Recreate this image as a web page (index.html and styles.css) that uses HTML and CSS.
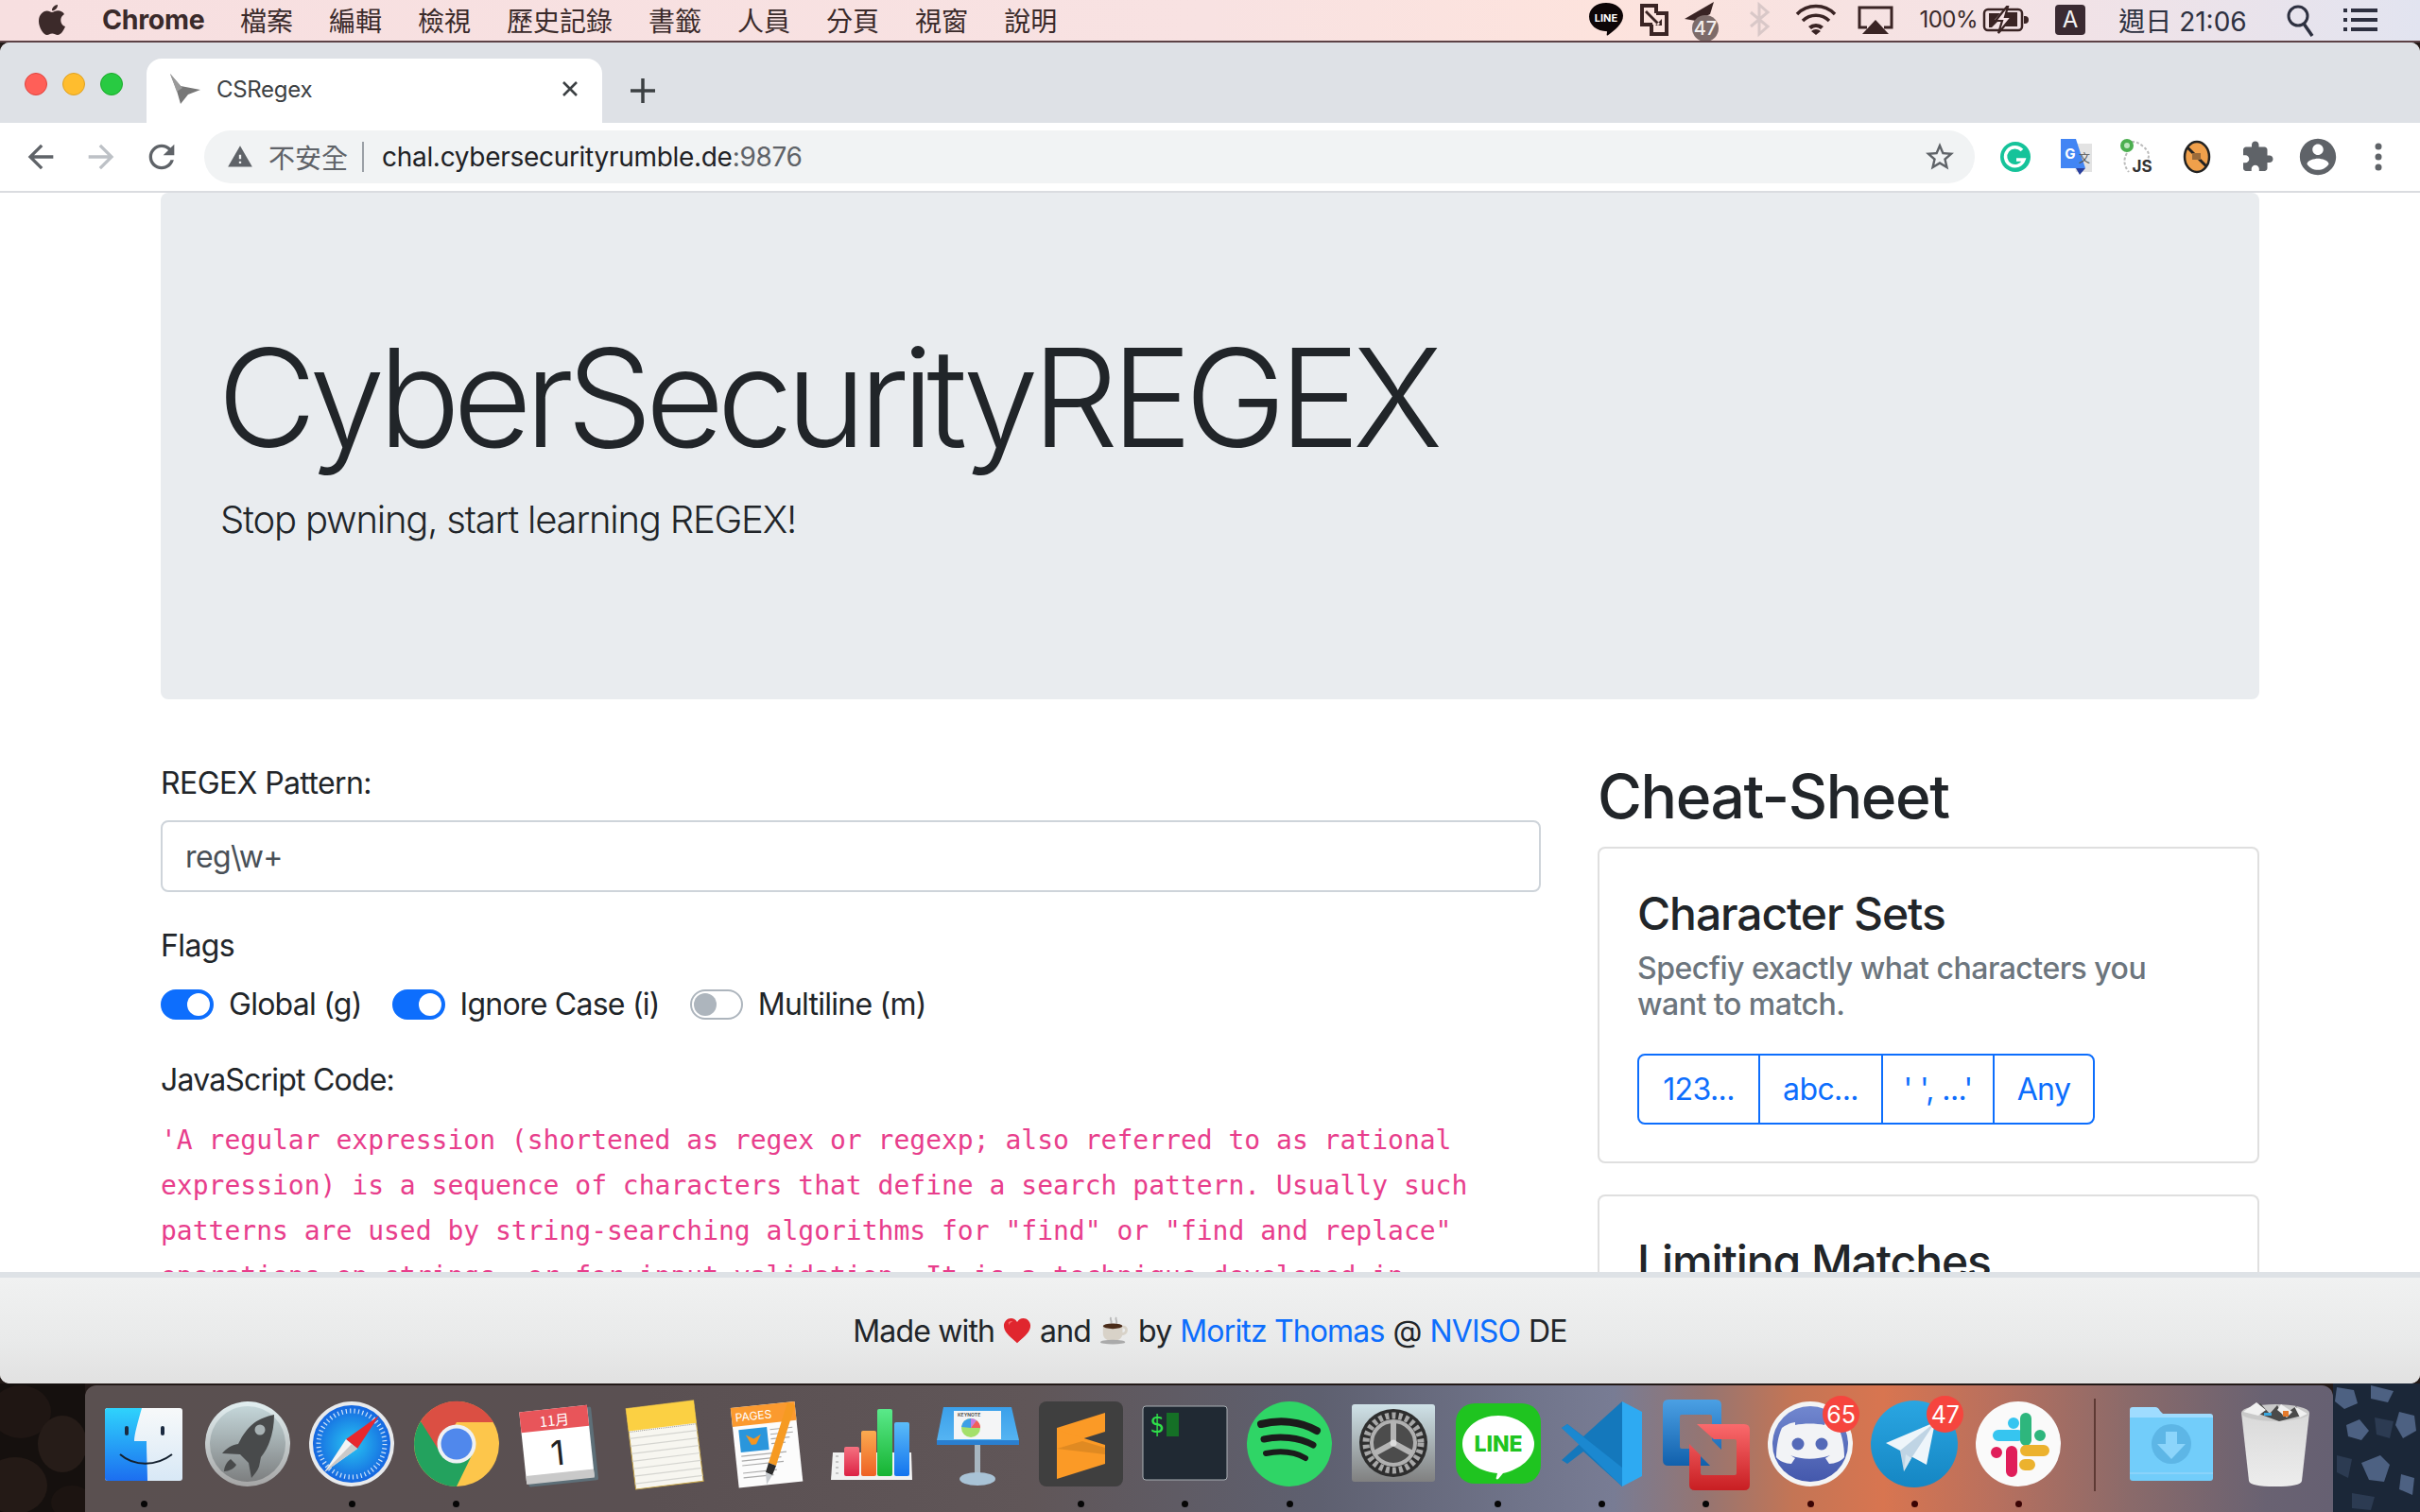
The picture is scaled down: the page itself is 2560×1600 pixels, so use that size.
FILE: index.html
```html
<!DOCTYPE html>
<html lang="zh-Hant">
<head>
<meta charset="utf-8">
<title>CSRegex</title>
<link rel="stylesheet" href="styles.css">
</head>
<body>
<header class="menubar">
  <svg class="apple" width="30" height="36" viewBox="0 0 30 36"><path fill="#3c2a2a" d="M21 2c.3 3-2.500 6.500-6 6.300C14.600 5 18 2.200 21 2zM15 10c1.500 0 3.500-1.700 6.500-1.700 2.500 0 5 1.300 6.500 3.600-5.500 3.200-4.600 11 1 13.200-1.500 3.700-4.500 9-8 9-2.200 0-3.200-1.500-5.800-1.500S12 34 9.800 34C6 34 1 26 1 19.500 1 12.500 5.500 8.500 9.700 8.500c2.300 0 4 1.500 5.300 1.500z"/></svg>
  <strong class="app-name">Chrome</strong>
  <nav class="menus"><span>檔案</span><span>編輯</span><span>檢視</span><span>歷史記錄</span><span>書籤</span><span>人員</span><span>分頁</span><span>視窗</span><span>說明</span></nav>
  <div class="status">
    <svg width="50" height="44" viewBox="0 0 50 44"><path fill="#0d0506" d="M25 5c10 0 18 6 18 14 0 9-9 16-16 21-1 .6-1.500 0-1.300-1l.4-3C15 36 7 29 7 20 7 11 15 5 25 5z" transform="translate(0 -1) scale(1 .98)"/><text class="line-mini" x="25" y="24" text-anchor="middle">LINE</text></svg>
    <svg width="52" height="44" viewBox="0 0 52 44"><g fill="none" stroke="#3a2424" stroke-width="4"><path d="M24 27H13V7h15v8"/><path d="M28 15h11v22H23V27"/></g><path fill="#3a2424" d="M18 12l14 14-2 2-14-14z M27 28h7v-7z"/></svg>
    <svg width="56" height="44" viewBox="0 0 56 44"><path fill="#3a2424" d="M6 21L37 3 33 16 18 23z"/><circle cx="28" cy="31" r="14" fill="#7d6b69"/><text class="menu-badge" x="28" y="38" text-anchor="middle">47</text></svg>
    <svg width="58" height="44" viewBox="0 0 58 44"><path fill="none" stroke="#d9c8c8" stroke-width="3" d="M20 14l18 15-9 8V6l9 8-18 15"/></svg>
    <svg width="62" height="44" viewBox="0 0 62 44"><g fill="none" stroke="#3a2424" stroke-width="3.500"><path d="M11 16a28 28 0 0 1 40 0"/><path d="M17 23a20 20 0 0 1 28 0"/></g><path fill="#3a2424" d="M23 29a12 12 0 0 1 16 0l-3 3a8 8 0 0 0-10 0z M26 34a7 7 0 0 1 10 0l-5 4z"/></svg>
    <svg width="64" height="44" viewBox="0 0 64 44"><path fill="none" stroke="#3a2424" stroke-width="3" d="M23 30h-8V9h34v21h-8"/><path fill="#3a2424" d="M32 22l14 15H18z"/></svg>
    <span class="pct">100%</span>
    <svg width="56" height="44" viewBox="0 0 56 44"><rect x="5" y="11" width="40" height="22" rx="4" fill="none" stroke="#3a2424" stroke-width="2.500"/><path fill="#3a2424" d="M47 18h1a3.500 3.500 0 0 1 0 8h-1z"/><path fill="#3a2424" d="M10 15h12l-6 7h5l-8 8H10z M28 14h12v15H24l7-8h-6z"/><path d="M29 8L17 23h7l-4 13 14-17h-7l3-11z" fill="#f7e3e6" stroke="#3a2424" stroke-width="2.200"/></svg>
    <span class="input-mode"><span class="input-a">A</span></span>
    <span class="clock">週日 21:06</span>
    <svg width="76" height="44" viewBox="0 0 76 44"><circle cx="41" cy="18" r="10" fill="none" stroke="#2d3040" stroke-width="3"/><path stroke="#2d3040" stroke-width="3.500" d="M47 26l9 13"/></svg>
    <svg width="62" height="44" viewBox="0 0 62 44"><g fill="#2d3040"><rect x="13" y="10" width="4" height="4"/><rect x="13" y="20" width="4" height="4"/><rect x="13" y="30" width="4" height="4"/><rect x="21" y="10" width="28" height="4"/><rect x="21" y="20" width="28" height="4"/><rect x="21" y="30" width="28" height="4"/></g></svg>
  </div>
</header>

<section class="window">
  <div class="tabstrip">
    <div class="traffic"><i class="light red"></i><i class="light yellow"></i><i class="light green"></i></div>
    <div class="tab">
      <svg class="favicon" width="34" height="36" viewBox="0 0 34 36"><path fill="#777" d="M1 2l11 13 21 4-13 5-8 10-4-14z"/><path fill="#9a9a9a" d="M1 2l7 19 6-4z"/></svg>
      <span class="tab-title">CSRegex</span>
      <svg class="tab-close" width="20" height="20" viewBox="0 0 20 20"><path stroke="#3c4043" stroke-width="2.600" d="M3 3l14 14M17 3L3 17"/></svg>
    </div>
    <svg class="newtab" width="28" height="28" viewBox="0 0 28 28"><path stroke="#3c4043" stroke-width="3.500" d="M14 1v26M1 14h26"/></svg>
  </div>

  <div class="toolbar">
    <span class="tool"><svg width="40" height="40" viewBox="0 0 24 24"><path fill="#5f6368" d="M20 11H7.830l5.590-5.590L12 4l-8 8 8 8 1.410-1.410L7.830 13H20v-2z"/></svg></span>
    <span class="tool"><svg width="40" height="40" viewBox="0 0 24 24"><path fill="#bdc1c6" d="M12 4l-1.410 1.410L16.170 11H4v2h12.170l-5.580 5.590L12 20l8-8z"/></svg></span>
    <span class="tool"><svg width="40" height="40" viewBox="0 0 24 24"><path fill="#5f6368" d="M17.650 6.350C16.200 4.900 14.210 4 12 4c-4.420 0-7.990 3.580-7.990 8s3.570 8 7.990 8c3.730 0 6.840-2.550 7.730-6h-2.080c-.82 2.330-3.040 4-5.650 4-3.310 0-6-2.690-6-6s2.690-6 6-6c1.660 0 3.140.69 4.220 1.780L13 11h7V4l-2.350 2.350z"/></svg></span>
    <div class="omnibox">
      <svg class="warn" width="28" height="28" viewBox="0 0 24 24"><path fill="#5f6368" d="M1 21h22L12 2 1 21zm12-3h-2v-2h2v2zm0-4h-2v-4h2v4z"/></svg>
      <span class="insecure">不安全</span>
      <i class="omni-div"></i>
      <span class="url">chal.cybersecurityrumble.de<span class="port">:9876</span></span>
      <svg class="star" width="36" height="36" viewBox="0 0 24 24"><path fill="#5f6368" d="M22 9.240l-7.190-.62L12 2 9.190 8.630 2 9.240l5.460 4.730L5.820 21 12 17.270 18.180 21l-1.630-7.030L22 9.240zM12 15.400l-3.760 2.270 1-4.280-3.320-2.880 4.380-.38L12 6.100l1.710 4.040 4.380.38-3.320 2.880 1 4.280L12 15.400z"/></svg>
    </div>
    <div class="extensions">
      <span class="tool"><svg width="36" height="36" viewBox="0 0 36 36"><circle cx="18" cy="18" r="16" fill="#15c39a"/><path fill="none" stroke="#fff" stroke-width="3.500" d="M25 11a10 10 0 1 0 2 10h-8"/></svg></span>
      <span class="tool"><svg width="36" height="40" viewBox="0 0 36 40"><path fill="#e3e3e3" d="M12 6h23v30H18z"/><path fill="#4285f4" d="M2 1h16l10 31H2z"/><path fill="#2a3f9d" d="M18 32h10l-6 7z"/><text class="ext-g" x="12" y="22" text-anchor="middle">G</text><text class="ext-t" x="27" y="26" text-anchor="middle">文</text></svg></span>
      <span class="tool"><svg width="36" height="40" viewBox="0 0 36 40"><g fill="none" stroke="#bbb" stroke-width="2" stroke-dasharray="3 2"><path d="M4 8q10-8 20 0t6 14"/><path d="M8 16q-6 10 2 20"/></g><circle cx="8" cy="8" r="7" fill="#4caf50"/><circle cx="8" cy="8" r="3" fill="#bde5bf"/><text class="ext-js" x="24" y="36" text-anchor="middle">JS</text></svg></span>
      <span class="tool"><svg width="32" height="36" viewBox="0 0 32 36"><ellipse cx="16" cy="18" rx="13" ry="16" fill="#f0a04b" stroke="#222" stroke-width="2.500"/><path d="M6 8l20 20" stroke="#222" stroke-width="3"/><rect x="11" y="14" width="9" height="7" fill="#9a6a3a"/></svg></span>
      <span class="tool"><svg width="36" height="36" viewBox="0 0 24 24"><path fill="#5f6368" d="M20.500 11H19V7c0-1.100-.9-2-2-2h-4V3.500C13 2.120 11.880 1 10.500 1S8 2.120 8 3.500V5H4c-1.100 0-1.990.9-1.990 2v3.800H3.500c1.490 0 2.700 1.210 2.700 2.700s-1.210 2.700-2.700 2.700H2V20c0 1.100.9 2 2 2h3.800v-1.500c0-1.490 1.210-2.700 2.700-2.700 1.490 0 2.700 1.210 2.700 2.700V22H17c1.100 0 2-.9 2-2v-4h1.500c1.380 0 2.500-1.120 2.500-2.500S21.880 11 20.500 11z"/></svg></span>
      <span class="tool"><svg width="46" height="46" viewBox="0 0 24 24"><path fill="#5f6368" d="M12 2C6.480 2 2 6.480 2 12s4.480 10 10 10 10-4.480 10-10S17.520 2 12 2zm0 3c1.660 0 3 1.340 3 3s-1.340 3-3 3-3-1.340-3-3 1.340-3 3-3zm0 14.200c-2.500 0-4.710-1.280-6-3.220.03-1.990 4-3.080 6-3.080 1.990 0 5.970 1.090 6 3.080-1.290 1.940-3.500 3.220-6 3.220z"/></svg></span>
      <span class="tool"><svg width="12" height="32" viewBox="0 0 12 32"><g fill="#5f6368"><circle cx="6" cy="5" r="3.500"/><circle cx="6" cy="16" r="3.500"/><circle cx="6" cy="27" r="3.500"/></g></svg></span>
    </div>
  </div>

  <main class="page">
    <div class="jumbotron">
      <h1 class="display">CyberSecurityREGEX</h1>
      <p class="lead">Stop pwning, start learning REGEX!</p>
    </div>
    <div class="columns">
      <div class="left">
        <label class="field-label">REGEX Pattern:</label>
        <div class="input">reg\w+</div>
        <div class="flags-label">Flags</div>
        <div class="flags">
          <span class="switch on"></span><span class="flag-name">Global (g)</span>
          <span class="switch on"></span><span class="flag-name">Ignore Case (i)</span>
          <span class="switch"></span><span class="flag-name">Multiline (m)</span>
        </div>
        <div class="code-label">JavaScript Code:</div>
        <code class="code">'A regular expression (shortened as regex or regexp; also referred to as rational expression) is a sequence of characters that define a search pattern. Usually such patterns are used by string-searching algorithms for "find" or "find and replace" operations on strings, or for input validation. It is a technique developed in</code>
      </div>
      <aside class="right">
        <h2 class="sheet-title">Cheat-Sheet</h2>
        <div class="card">
          <h4 class="card-title">Character Sets</h4>
          <h6 class="card-sub">Specfiy exactly what characters you want to match.</h6>
          <div class="btn-group"><span class="btn b1">123...</span><span class="btn b2">abc...</span><span class="btn b3">' ', ...'</span><span class="btn b4">Any</span></div>
        </div>
        <div class="card second">
          <h4 class="card-title">Limiting Matches</h4>
        </div>
      </aside>
    </div>
  </main>

  <footer class="footer">
    <span>Made with</span>
    <svg class="emoji" width="30" height="30" viewBox="0 0 32 30"><path fill="#e0262e" d="M16 29C6 21 1 16 1 9.500 1 4.500 5 1 9 1c3 0 5.500 1.500 7 4.500C17.500 2.500 20 1 23 1c4 0 8 3.500 8 8.500C31 16 26 21 16 29z"/><path fill="#f56a6a" d="M6 6c2-2 4-2 5-1-2 0-4 2-4 4z"/></svg>
    <span>and</span>
    <svg class="emoji" width="32" height="30" viewBox="0 0 34 32"><path fill="none" stroke="#b9b9b9" stroke-width="2" d="M13 1c-2 3 2 4 0 7M19 1c-2 3 2 4 0 7"/><path fill="#d8d2c8" d="M4 10h22v9c0 6-5 9-11 9S4 25 4 19z"/><path fill="none" stroke="#d8d2c8" stroke-width="3" d="M26 12c6-1 6 8-1 8"/><ellipse cx="15" cy="11" rx="11" ry="3" fill="#4a2c1a"/><ellipse cx="15" cy="29" rx="14" ry="2.500" fill="#aaa"/></svg>
    <span>by</span>
    <a class="link">Moritz Thomas</a>
    <span>@</span>
    <a class="link">NVISO</a>
    <span>DE</span>
  </footer>
</section>

<div class="desktop">
  <svg class="wall" width="90" height="136" viewBox="0 0 90 136"><rect width="90" height="136" fill="#15100e"/><ellipse cx="22" cy="30" rx="32" ry="28" fill="#1f1613"/><ellipse cx="66" cy="64" rx="26" ry="30" fill="#261c18"/><ellipse cx="16" cy="108" rx="34" ry="30" fill="#241a16"/><ellipse cx="76" cy="126" rx="22" ry="18" fill="#1c1411"/></svg>
  <div class="dock">
    <div class="dock-item">
      <svg width="100" height="100" viewBox="0 0 100 100"><defs><linearGradient id="fb" x1="0" y1="0" x2="0" y2="1"><stop offset="0" stop-color="#2fd3fc"/><stop offset="1" stop-color="#1c6ef0"/></linearGradient><linearGradient id="fw" x1="0" y1="0" x2="0" y2="1"><stop offset="0" stop-color="#f7f9fa"/><stop offset="1" stop-color="#d8e8f6"/></linearGradient></defs><rect x="9" y="12" width="82" height="77" rx="3" fill="url(#fw)"/><path fill="url(#fb)" d="M12 12h36c-4 14-8 28-8 35h13c0 14 1 30 1 42H12a3 3 0 0 1-3-3V15a3 3 0 0 1 3-3z"/><g fill="#1b2a40"><rect x="30" y="31" width="4" height="10" rx="2"/><rect x="68" y="31" width="4" height="10" rx="2"/></g><path fill="none" stroke="#14202e" stroke-width="2" d="M25 61c15 13 38 13 55 0"/></svg>
      <i class="dot"></i>
    </div>
    <div class="dock-item">
      <svg width="100" height="100" viewBox="0 0 100 100"><defs><linearGradient id="rr" x1="0" y1="0" x2="0" y2="1"><stop offset="0" stop-color="#e2eff1"/><stop offset="1" stop-color="#a5a5a5"/></linearGradient><linearGradient id="ri" x1="0" y1="0" x2="0" y2="1"><stop offset="0" stop-color="#c4d6d9"/><stop offset="1" stop-color="#7d7f80"/></linearGradient></defs><circle cx="50" cy="50" r="45" fill="url(#rr)"/><circle cx="50" cy="50" r="40" fill="url(#ri)"/><path fill="#484a4b" d="M78 19c0 18-5 34-14 45l-2 10c-2 5-5 8-8 12l-3-16-9-9-19-1c4-5 10-9 17-10C50 30 60 23 78 19z"/><circle cx="63" cy="35" r="5.500" fill="#a8b2b4"/><path fill="#484a4b" d="M38 72c-2 4-8 7-13 7 0-5 3-10 7-13z"/></svg>
    </div>
    <div class="dock-item">
      <svg width="100" height="100" viewBox="0 0 100 100"><defs><radialGradient id="sb"><stop offset="0" stop-color="#28c5f2"/><stop offset="1" stop-color="#1566e0"/></radialGradient></defs><circle cx="50" cy="50" r="45" fill="#e8eaec"/><circle cx="50" cy="50" r="41" fill="url(#sb)"/><circle cx="50" cy="50" r="35" fill="none" stroke="#fff" stroke-opacity=".8" stroke-width="5" stroke-dasharray="1.200 3.200"/><path fill="#e8282e" d="M79 20L44 45l12 10z"/><path fill="#f4f4f4" d="M21 80l35-25-12-10z"/><path fill="#c9c9c9" d="M21 80l35-25-6-5z"/></svg>
      <i class="dot"></i>
    </div>
    <div class="dock-item">
      <svg width="100" height="100" viewBox="0 0 100 100"><circle cx="50" cy="50" r="45" fill="#fdc64b"/><path fill="#23a25e" d="M12 26A45 45 0 0 0 50 95L68 58 30 50z"/><path fill="#db4f43" d="M12 26A45 45 0 0 1 89 27H50L32 58z"/><circle cx="50" cy="50" r="20.500" fill="#eef1f4"/><circle cx="50" cy="50" r="16.500" fill="#5088ec"/></svg>
      <i class="dot"></i>
    </div>
    <div class="dock-item">
      <svg width="100" height="100" viewBox="0 0 100 100"><g transform="rotate(-6 50 50)"><rect x="12" y="14" width="74" height="78" rx="2" fill="#5d6f78"/><rect x="10" y="12" width="72" height="76" fill="#fff"/><rect x="10" y="12" width="72" height="22" fill="#e8555a"/><rect x="10" y="80" width="72" height="9" fill="#c9c9c9"/><text class="cal-m" x="46" y="30" text-anchor="middle">11月</text><text class="cal-d" x="46" y="72" text-anchor="middle">1</text></g></svg>
    </div>
    <div class="dock-item">
      <svg width="100" height="100" viewBox="0 0 100 100"><g transform="rotate(-7 50 50)"><rect x="14" y="8" width="72" height="86" fill="#f7f6f0" stroke="#c9a84a"/><rect x="14" y="8" width="72" height="24" fill="#fbd043"/><g stroke="#d5d5d0" stroke-width="1.200"><path d="M14 40h72M14 48h72M14 56h72M14 64h72M14 72h72M14 80h72M14 88h72"/></g><path stroke="#999" stroke-dasharray="1 1" d="M14 33h72"/></g></svg>
    </div>
    <div class="dock-item">
      <svg width="100" height="100" viewBox="0 0 100 100"><g transform="rotate(-6 50 50)"><rect x="14" y="8" width="68" height="85" fill="#fcfcfc"/><rect x="14" y="8" width="68" height="20" fill="#fb9a2f"/><text class="pages-t" x="18" y="23">PAGES</text><rect x="20" y="32" width="30" height="24" fill="#2a96dc"/><path fill="#f49521" d="M27 38l8 5 8-4-6 10h-5z"/><g stroke="#aaa" stroke-width="1.200"><path d="M53 35h24M53 40h24M53 45h20M53 50h15M20 60h48M20 65h42M20 70h44M20 78h36M20 83h32"/></g></g><path fill="#f69a22" d="M70 6l8 3-20 64-8-3z"/><path fill="#2c2c2c" d="M50 70l8 3-4 10-7-3z"/><path fill="#c8ccd0" d="M47 80l7 3-6 10z"/></svg>
    </div>
    <div class="dock-item">
      <svg width="100" height="100" viewBox="0 0 100 100"><defs><linearGradient id="n1" x1="0" y1="0" x2="0" y2="1"><stop offset="0" stop-color="#f57180"/><stop offset="1" stop-color="#dc2244"/></linearGradient><linearGradient id="n2" x1="0" y1="0" x2="0" y2="1"><stop offset="0" stop-color="#fbab50"/><stop offset="1" stop-color="#ee6124"/></linearGradient><linearGradient id="n3" x1="0" y1="0" x2="0" y2="1"><stop offset="0" stop-color="#5ae98a"/><stop offset="1" stop-color="#16b332"/></linearGradient><linearGradient id="n4" x1="0" y1="0" x2="0" y2="1"><stop offset="0" stop-color="#5bbcf8"/><stop offset="1" stop-color="#1474ee"/></linearGradient></defs><path fill="#f1f1f1" d="M8 59h83l1 29H6z"/><rect x="20" y="53" width="16" height="31" rx="2" fill="url(#n1)"/><rect x="38" y="36" width="16" height="48" rx="2" fill="url(#n2)"/><rect x="55" y="13" width="16" height="71" rx="2" fill="url(#n3)"/><rect x="73" y="27" width="16" height="57" rx="2" fill="url(#n4)"/><path stroke="#999" d="M11 63h3M11 69h3M11 75h3M11 81h3"/></svg>
    </div>
    <div class="dock-item">
      <svg width="100" height="100" viewBox="0 0 100 100"><defs><linearGradient id="k1" x1="0" y1="0" x2="0" y2="1"><stop offset="0" stop-color="#3ba0ea"/><stop offset="1" stop-color="#55b4f2"/></linearGradient></defs><path fill="url(#k1)" d="M14 11h72l8 35H7z"/><rect x="7" y="46" width="87" height="5" fill="#2a7fd0"/><rect x="25" y="15" width="50" height="30" fill="#f4f5f6"/><text class="key-t" x="29" y="21">KEYNOTE</text><circle cx="43" cy="33" r="10" fill="#a4e06a"/><path fill="#3c9fe6" d="M43 33V23a10 10 0 0 0-10 9z"/><path fill="#f25c5c" d="M43 33h10a10 10 0 0 0-4-8z"/><path fill="#c77ae0" d="M43 33l6-8a10 10 0 0 0-6-2z"/><path fill="#a8b6c0" d="M47 51h6v33h-6z"/><ellipse cx="50" cy="87" rx="19" ry="7" fill="#a9c3d6"/></svg>
    </div>
    <div class="dock-item">
      <svg width="100" height="100" viewBox="0 0 100 100"><rect x="5" y="5" width="89" height="90" rx="8" fill="#3f3f3f"/><path fill="#fb9a26" d="M75 17v20L24 53V33z"/><path fill="#fb9a26" d="M24 46l51 16v20l-51 16V76z" transform="translate(0 -11)"/><path fill="#e08a22" d="M24 55l27-8 24 7v7z"/></svg>
      <i class="dot"></i>
    </div>
    <div class="dock-item">
      <svg width="100" height="100" viewBox="0 0 100 100"><rect x="5" y="10" width="89" height="78" rx="3" fill="#202933" stroke="#aab0b5" stroke-width="1"/><text class="term-t" x="12" y="38">$</text><rect x="30" y="17" width="13" height="25" fill="#157026"/></svg>
      <i class="dot"></i>
    </div>
    <div class="dock-item">
      <svg width="100" height="100" viewBox="0 0 100 100"><circle cx="50" cy="50" r="45" fill="#2fd566"/><g fill="none" stroke="#1b1b1b" stroke-linecap="round"><path stroke-width="8" d="M20 29c20-5 42-3 59 7"/><path stroke-width="7" d="M23 45c17-4 37-2 52 6"/><path stroke-width="6" d="M25 60c15-3 30-2 42 5"/></g></svg>
      <i class="dot"></i>
    </div>
    <div class="dock-item">
      <svg width="100" height="100" viewBox="0 0 100 100"><defs><linearGradient id="pf" x1="0" y1="0" x2="0" y2="1"><stop offset="0" stop-color="#cfe2e8"/><stop offset="1" stop-color="#808080"/></linearGradient></defs><rect x="6" y="8" width="88" height="82" rx="3" fill="url(#pf)"/><circle cx="50" cy="49" r="36" fill="#2e2e2e"/><circle cx="50" cy="49" r="29" fill="none" stroke="#a8a8a8" stroke-width="7" stroke-dasharray="4 3.100"/><circle cx="50" cy="49" r="23" fill="#4c4c4c" stroke="#b0b0b0" stroke-width="4"/><g stroke="#b4b4b4" stroke-width="6"><path d="M50 49V26"/><path d="M50 49l20 11"/><path d="M50 49l-20 11"/></g><circle cx="50" cy="49" r="3.500" fill="#ddd"/></svg>
    </div>
    <div class="dock-item">
      <svg width="100" height="100" viewBox="0 0 100 100"><rect x="5" y="7" width="90" height="85" rx="20" fill="#1fc420"/><path fill="#fff" d="M50 20c22 0 38 14 38 30 0 15-15 27-33 31l-5 6c-2 1-3 0-2-2l1-4C27 79 12 66 12 50c0-16 16-30 38-30z"/><text class="line-big" x="50" y="58" text-anchor="middle">LINE</text></svg>
      <i class="dot"></i>
    </div>
    <div class="dock-item">
      <svg width="100" height="100" viewBox="0 0 100 100"><path fill="#1478bc" d="M71 5L30 42 13 29 7 33l19 17L7 67l6 4 17-13 41 37z"/><path fill="#1b88d0" d="M7 33l6-4 58 46v20z"/><path fill="#2eaaf2" d="M71 5l21 11v68L71 95z"/></svg>
      <i class="dot"></i>
    </div>
    <div class="dock-item">
      <svg width="100" height="100" viewBox="0 0 100 100"><defs><linearGradient id="vb" x1="0" y1="0" x2="0" y2="1"><stop offset="0" stop-color="#4ba0e4"/><stop offset="1" stop-color="#1160ac"/></linearGradient><linearGradient id="vr" x1="0" y1="0" x2="0" y2="1"><stop offset="0" stop-color="#fa6a6c"/><stop offset="1" stop-color="#c81e22"/></linearGradient></defs><path fill="url(#vb)" d="M10 3h50q6 0 6 6v47L56 46V21q0-2-2-2H24q-2 0-2 2v32q0 2 2 2h12l18 18H10q-6 0-6-6V9q0-6 6-6z"/><path fill="url(#vr)" d="M40 29h50q6 0 6 6v58q0 6-6 6H38q-6 0-6-6V50l12 12v19q0 2 2 2h34q2 0 2-2V47q0-2-2-2H58z"/></svg>
      <i class="dot"></i>
    </div>
    <div class="dock-item">
      <svg width="100" height="100" viewBox="0 0 100 100"><defs><linearGradient id="db" x1="0" y1="0" x2="0" y2="1"><stop offset="0" stop-color="#7187cf"/><stop offset="1" stop-color="#4458ac"/></linearGradient></defs><circle cx="50" cy="50" r="45" fill="#f4f4f4"/><circle cx="50" cy="50" r="40" fill="url(#db)"/><path fill="#f2f3f6" d="M34 27c-7 1-11 4-14 6-4 9-6 20-6 31 3 4 10 7 16 7l4-6c-2-1-3-2-5-3 13 5 27 5 42 0l-5 3 4 6c6 0 13-3 16-7 0-11-2-22-6-31-3-2-7-5-14-6l-1 3c-8-2-23-2-31 0z"/><circle cx="37" cy="50" r="6.500" fill="#5469b8"/><circle cx="62" cy="50" r="6.500" fill="#5469b8"/></svg>
      <i class="dot warm"></i>
      <span class="badge">65</span>
    </div>
    <div class="dock-item">
      <svg width="100" height="100" viewBox="0 0 100 100"><defs><linearGradient id="tg" x1="0" y1="0" x2="0" y2="1"><stop offset="0" stop-color="#2aa6e2"/><stop offset="1" stop-color="#1586c3"/></linearGradient></defs><circle cx="50" cy="50" r="46" fill="url(#tg)"/><path fill="#eef5fa" d="M72 27L20 49l15 8 28 15z"/><path fill="#bfd4e4" d="M35 57l4 22 8-14 25-38z"/><path fill="#d6e6f0" d="M39 79l8-14-6-4z"/></svg>
      <i class="dot warm"></i>
      <span class="badge">47</span>
    </div>
    <div class="dock-item">
      <svg width="100" height="100" viewBox="0 0 100 100"><circle cx="50" cy="50" r="45" fill="#fafafa"/><g stroke-linecap="round" fill="none" stroke-width="12"><path stroke="#36c5f0" d="M29 41h21M45 28h0"/><path stroke="#2eb67d" d="M58 23v23M73 41h0"/><path stroke="#e01e5a" d="M27 59h0M43 58v21"/><path stroke="#ecb22e" d="M58 57h19M57 72h5"/></g></svg>
      <i class="dot warm"></i>
    </div>
    <div class="dock-sep"></div>
    <div class="dock-item">
      <svg width="100" height="100" viewBox="0 0 100 100"><path fill="#9fdcff" d="M6 14q0-3 3-3h24q3 0 5 4l3 3h50q3 0 3 3v10H6z"/><path fill="#72cdfa" d="M6 22h88v64q0 3-3 3H9q-3 0-3-3z"/><path fill="#8ad3fa" d="M6 80h88v2H6z"/><circle cx="50" cy="50" r="21" fill="#5db6e6"/><path fill="#8cd5fb" d="M44 37h12v13h9L50 66 35 50h9z"/></svg>
    </div>
    <div class="dock-item">
      <svg width="100" height="100" viewBox="0 0 100 100"><defs><linearGradient id="tr" x1="0" y1="0" x2="0" y2="1"><stop offset="0" stop-color="#d9d9d9"/><stop offset="1" stop-color="#ededed"/></linearGradient></defs><path fill="url(#tr)" d="M14 17h72l-8 72q-1 6-28 6t-28-6z"/><ellipse cx="50" cy="17" rx="36" ry="9" fill="#c9c9c9"/><path fill="#4a4a4a" d="M24 15l10-8 10 11 8-9 6 11 14-10 6 10-24 6z"/><path fill="#f0f0f0" d="M16 16l14-10 10 8-8 6zM56 8l12 8-6 6-10-8zM70 10l14 8-8 4z"/><path fill="#3aa6dd" d="M38 17h8v3h-8z"/><path fill="#e57a2c" d="M58 15h6v6h-6z"/></svg>
    </div>
  </div>
  <svg class="wall" width="92" height="136" viewBox="0 0 92 136"><rect width="92" height="136" fill="#1b2738"/><g fill="#4d6182"><path d="M4 4l18 3 4 14-14 6-10-8z"/><path d="M40 2l24 6-6 12-18-4z"/><path d="M14 44l14-6 10 12-8 10-14-4z"/><path d="M70 30l16 4 2 16-14 8-8-14z"/><path d="M30 84l20-8 10 10-6 18-16-2z"/><path d="M72 96l14 4-2 18-14-6z"/></g><g fill="#2c3b52"><path d="M44 36l20 4-4 18-14-4z"/><path d="M4 76l16 4-4 20-12-6z"/><path d="M20 116l24 4-4 14-20-2z"/></g></svg>
</div>
</body>
</html>
```

FILE: styles.css
```css
* { box-sizing: border-box; }
html, body { margin: 0; padding: 0; }
body {
  width: 2560px; height: 1600px; overflow: hidden;
  display: flex; flex-direction: column;
  font-family: Inter, "Noto Sans CJK TC", sans-serif;
  background: #231a18;
  color: #212529;
}
svg { display: block; flex: none; }

/* macOS menu bar */
.menubar {
  height: 45px; flex: none; display: flex; align-items: center;
  padding-left: 40px; padding-bottom: 2px;
  background: linear-gradient(90deg, #f7dfe0 0%, #f8e2e2 50%, #fde3dd 66%, #f2e2e6 85%, #e2e4f0 100%);
  border-bottom: 2px solid #5c4246;
  color: #3a2a2a; font-size: 28px;
  font-family: Inter, "Noto Sans CJK TC", sans-serif;
}
.apple { margin-right: 38px; }
.app-name { font-weight: 700; font-size: 28.500px; letter-spacing: -0.300px; margin-right: 36px; width: 110px; }
.menus { display: flex; gap: 38px; font-family: "Noto Sans CJK TC", sans-serif; font-size: 28px; }
.status { display: flex; align-items: center; margin-left: auto; padding-right: 32px; }
.pct { width: 76px; margin-right: 2px; text-align: right; font-size: 24px; letter-spacing: -0.500px; color: #3a2a2a; }
.input-mode { width: 80px; display: flex; justify-content: center; }
.input-a {
  width: 32px; height: 32px; border-radius: 4px; background: #3a2a32; color: #f2f2f2;
  font-size: 24px; display: flex; align-items: center; justify-content: center;
}
.clock { width: 158px; margin-right: 2px; text-align: center; font-size: 28px; color: #2d3040; font-family: Inter, "Noto Sans CJK TC", sans-serif; white-space: nowrap; }
.line-mini { font: 700 11px Inter, sans-serif; fill: #fff; }
.menu-badge { font: 500 20px Inter, sans-serif; fill: #f3efee; }

/* browser window */
.window {
  height: 1419px; flex: none; display: flex; flex-direction: column;
  border-radius: 10px; overflow: hidden; background: #fff;
}
.tabstrip {
  height: 85px; flex: none; background: #dee1e6;
  display: flex; align-items: flex-end; position: relative;
}
.traffic { display: flex; gap: 16px; padding: 0 0 29px 26px; width: 155px; }
.light { width: 24px; height: 24px; border-radius: 50%; display: block; }
.red { background: #ff5f58; border: 1px solid #e0443e; }
.yellow { background: #ffbd2e; border: 1px solid #dea123; }
.green { background: #28ca42; border: 1px solid #1aab29; }
.tab {
  width: 482px; height: 68px; background: #fff; border-radius: 16px 16px 0 0;
  display: flex; align-items: center; padding: 0 24px 4px 24px;
}
.favicon { margin-right: 16px; }
.tab-title { flex: 1; font-size: 24px; color: #3c4043; letter-spacing: -0.300px; }
.newtab { margin: 0 0 20px 29px; }

.toolbar {
  height: 74px; flex: none; background: #fff; border-bottom: 2px solid #dadce0;
  display: flex; align-items: center; padding: 0 12px 0 11px;
}
.tool { width: 64px; height: 64px; display: flex; align-items: center; justify-content: center; flex: none; }
.omnibox {
  flex: 1; height: 56px; border-radius: 28px; margin-left: 13px; background: #f1f3f4;
  display: flex; align-items: center; padding: 0 19px 0 24px; font-size: 28px;
}
.warn { margin-right: 16px; }
.insecure { color: #5f6368; font-family: "Noto Sans CJK TC", sans-serif; font-size: 28px; }
.omni-div { width: 2px; height: 32px; background: #9aa0a6; margin: 0 19px 0 15px; }
.url { flex: 1; color: #202124; letter-spacing: -0.300px; }
.port { color: #5f6368; }
.extensions { display: flex; margin-left: 11px; }
.ext-g { font: 700 15px Inter, sans-serif; fill: #fff; }
.ext-t { font: 400 12px "Noto Sans CJK TC", sans-serif; fill: #555; }
.ext-js { font: 700 17px Inter, sans-serif; fill: #333; }

/* page */
.page { flex: 1; min-height: 0; overflow: hidden; padding: 0 170px; background: #fff; letter-spacing: -0.600px; }
.jumbotron {
  height: 536px; background: #e9ecef; border-radius: 8px;
  padding: 130px 64px 0;
}
.display { margin: 0 0 0 -4px; font-size: 144px; font-weight: 300; line-height: 173px; letter-spacing: -7.600px; white-space: nowrap; }
.lead { margin: 13px 0 0 -1px; font-size: 40px; font-weight: 300; line-height: 60px; letter-spacing: -1.200px; }
.columns { display: grid; grid-template-columns: 1460px 700px; gap: 60px; margin-top: 64px; }
.field-label, .flags-label, .code-label, .flag-name { font-size: 32px; line-height: 48px; }
.field-label { display: block; margin: 1px 0 15px; }
.input {
  height: 76px; border: 2px solid #ced4da; border-radius: 8px; background: #fff;
  color: #495057; font-size: 32px; line-height: 74px; padding: 0 24px;
}
.flags-label { margin-top: 33px; }
.flags { display: flex; align-items: center; margin-top: 13px; height: 50px; }
.switch {
  width: 56px; height: 32px; border-radius: 16px; flex: none; display: flex; align-items: center;
  border: 2px solid #adb5bd; background: #fff; padding: 0 2px;
}
.switch::after { content: ""; width: 24px; height: 24px; border-radius: 50%; background: #adb5bd; }
.switch.on { background: #0d6efd; border-color: #0d6efd; justify-content: flex-end; }
.switch.on::after { background: #fff; }
.flag-name { margin: 0 32px 0 16px; letter-spacing: -0.750px; }
.code-label { margin-top: 31px; letter-spacing: -0.800px; }
.code {
  display: block; margin-top: 16px; font-family: "DejaVu Sans Mono", monospace; font-size: 28px;
  line-height: 48px; color: #e83e8c; letter-spacing: 0;
}
.sheet-title { margin: 0 0 15px; font-size: 64px; font-weight: 500; line-height: 77px; letter-spacing: -1.400px; }
.card { border: 2px solid rgba(0,0,0,.125); border-radius: 8px; padding: 40px; background: #fff; height: 335px; }
.second { margin-top: 33px; }
.card-title { margin: 0; font-size: 48px; font-weight: 500; line-height: 58px; letter-spacing: -1.100px; }
.card-sub { margin: 10px 0 32px; font-size: 32px; font-weight: 500; line-height: 38.400px; color: #6c757d; letter-spacing: -0.500px; }
.btn-group { display: flex; }
.btn {
  height: 75px; border: 2px solid #0d6efd; color: #0d6efd; font-size: 32px;
  display: flex; align-items: center; justify-content: center; margin-left: -2px; white-space: nowrap;
}
.b1 { width: 130px; margin-left: 0; border-radius: 8px 0 0 8px; }
.b2 { width: 132px; }
.b3 { width: 120px; }
.b4 { width: 108px; border-radius: 0 8px 8px 0; }

.footer {
  height: 118px; flex: none; border-top: 6px solid #dee2e6;
  background: linear-gradient(180deg, #f0f1f1 0%, #e9eaea 60%, #e1e1e1 100%);
  display: flex; align-items: center; justify-content: center; gap: 9px; font-size: 32px; letter-spacing: -0.850px;
}
.link { color: #0d6efd; }

/* desktop + dock */
.desktop {
  flex: 1; min-height: 0; display: flex; align-items: flex-end;
}
.dock {
  width: 2378px; height: 134px; flex: none; border-radius: 12px 12px 0 0; display: flex; padding: 12px 0 0 7px;
  background: linear-gradient(90deg, #5a5050 0%, #5a5052 25%, #605658 42%, #5e6070 55%, #70748a 64%, #787c94 68%, #957572 72%, #c47555 76%, #d87550 80%, #b8705e 85%, #8a6a6a 91%, #696272 97%, #666072 100%);
}
.dock-item {
  width: 110.200px; flex: none; display: flex; flex-direction: column; align-items: center; position: relative;
}
.dot { width: 7px; height: 7px; border-radius: 50%; background: #060606; margin-top: 10px; display: block; }
.dot.warm { background: #3a0404; }
.dock-sep { width: 51px; flex: none; position: relative; }
.dock-sep::after { content: ""; display: block; width: 2px; height: 98px; margin: 2px auto 0; background: #5e3a34; }
.badge {
  position: absolute; top: -1px; right: 3px; width: 39px; height: 39px; border-radius: 50%;
  background: #f6453e; color: #fff; font-size: 25px; display: flex; align-items: center; justify-content: center;
}
.cal-m { font: 400 15px "Noto Sans CJK TC", sans-serif; fill: #fff; }
.cal-d { font: 400 36px Inter, sans-serif; fill: #222; }
.pages-t { font: 400 12px Inter, sans-serif; fill: #fff; }
.key-t { font: 700 5px Inter, sans-serif; fill: #555; }
.term-t { font: 400 26px "DejaVu Sans Mono", monospace; fill: #2fe04a; }
.line-big { font: 800 23px Inter, sans-serif; fill: #1fc420; }
```
